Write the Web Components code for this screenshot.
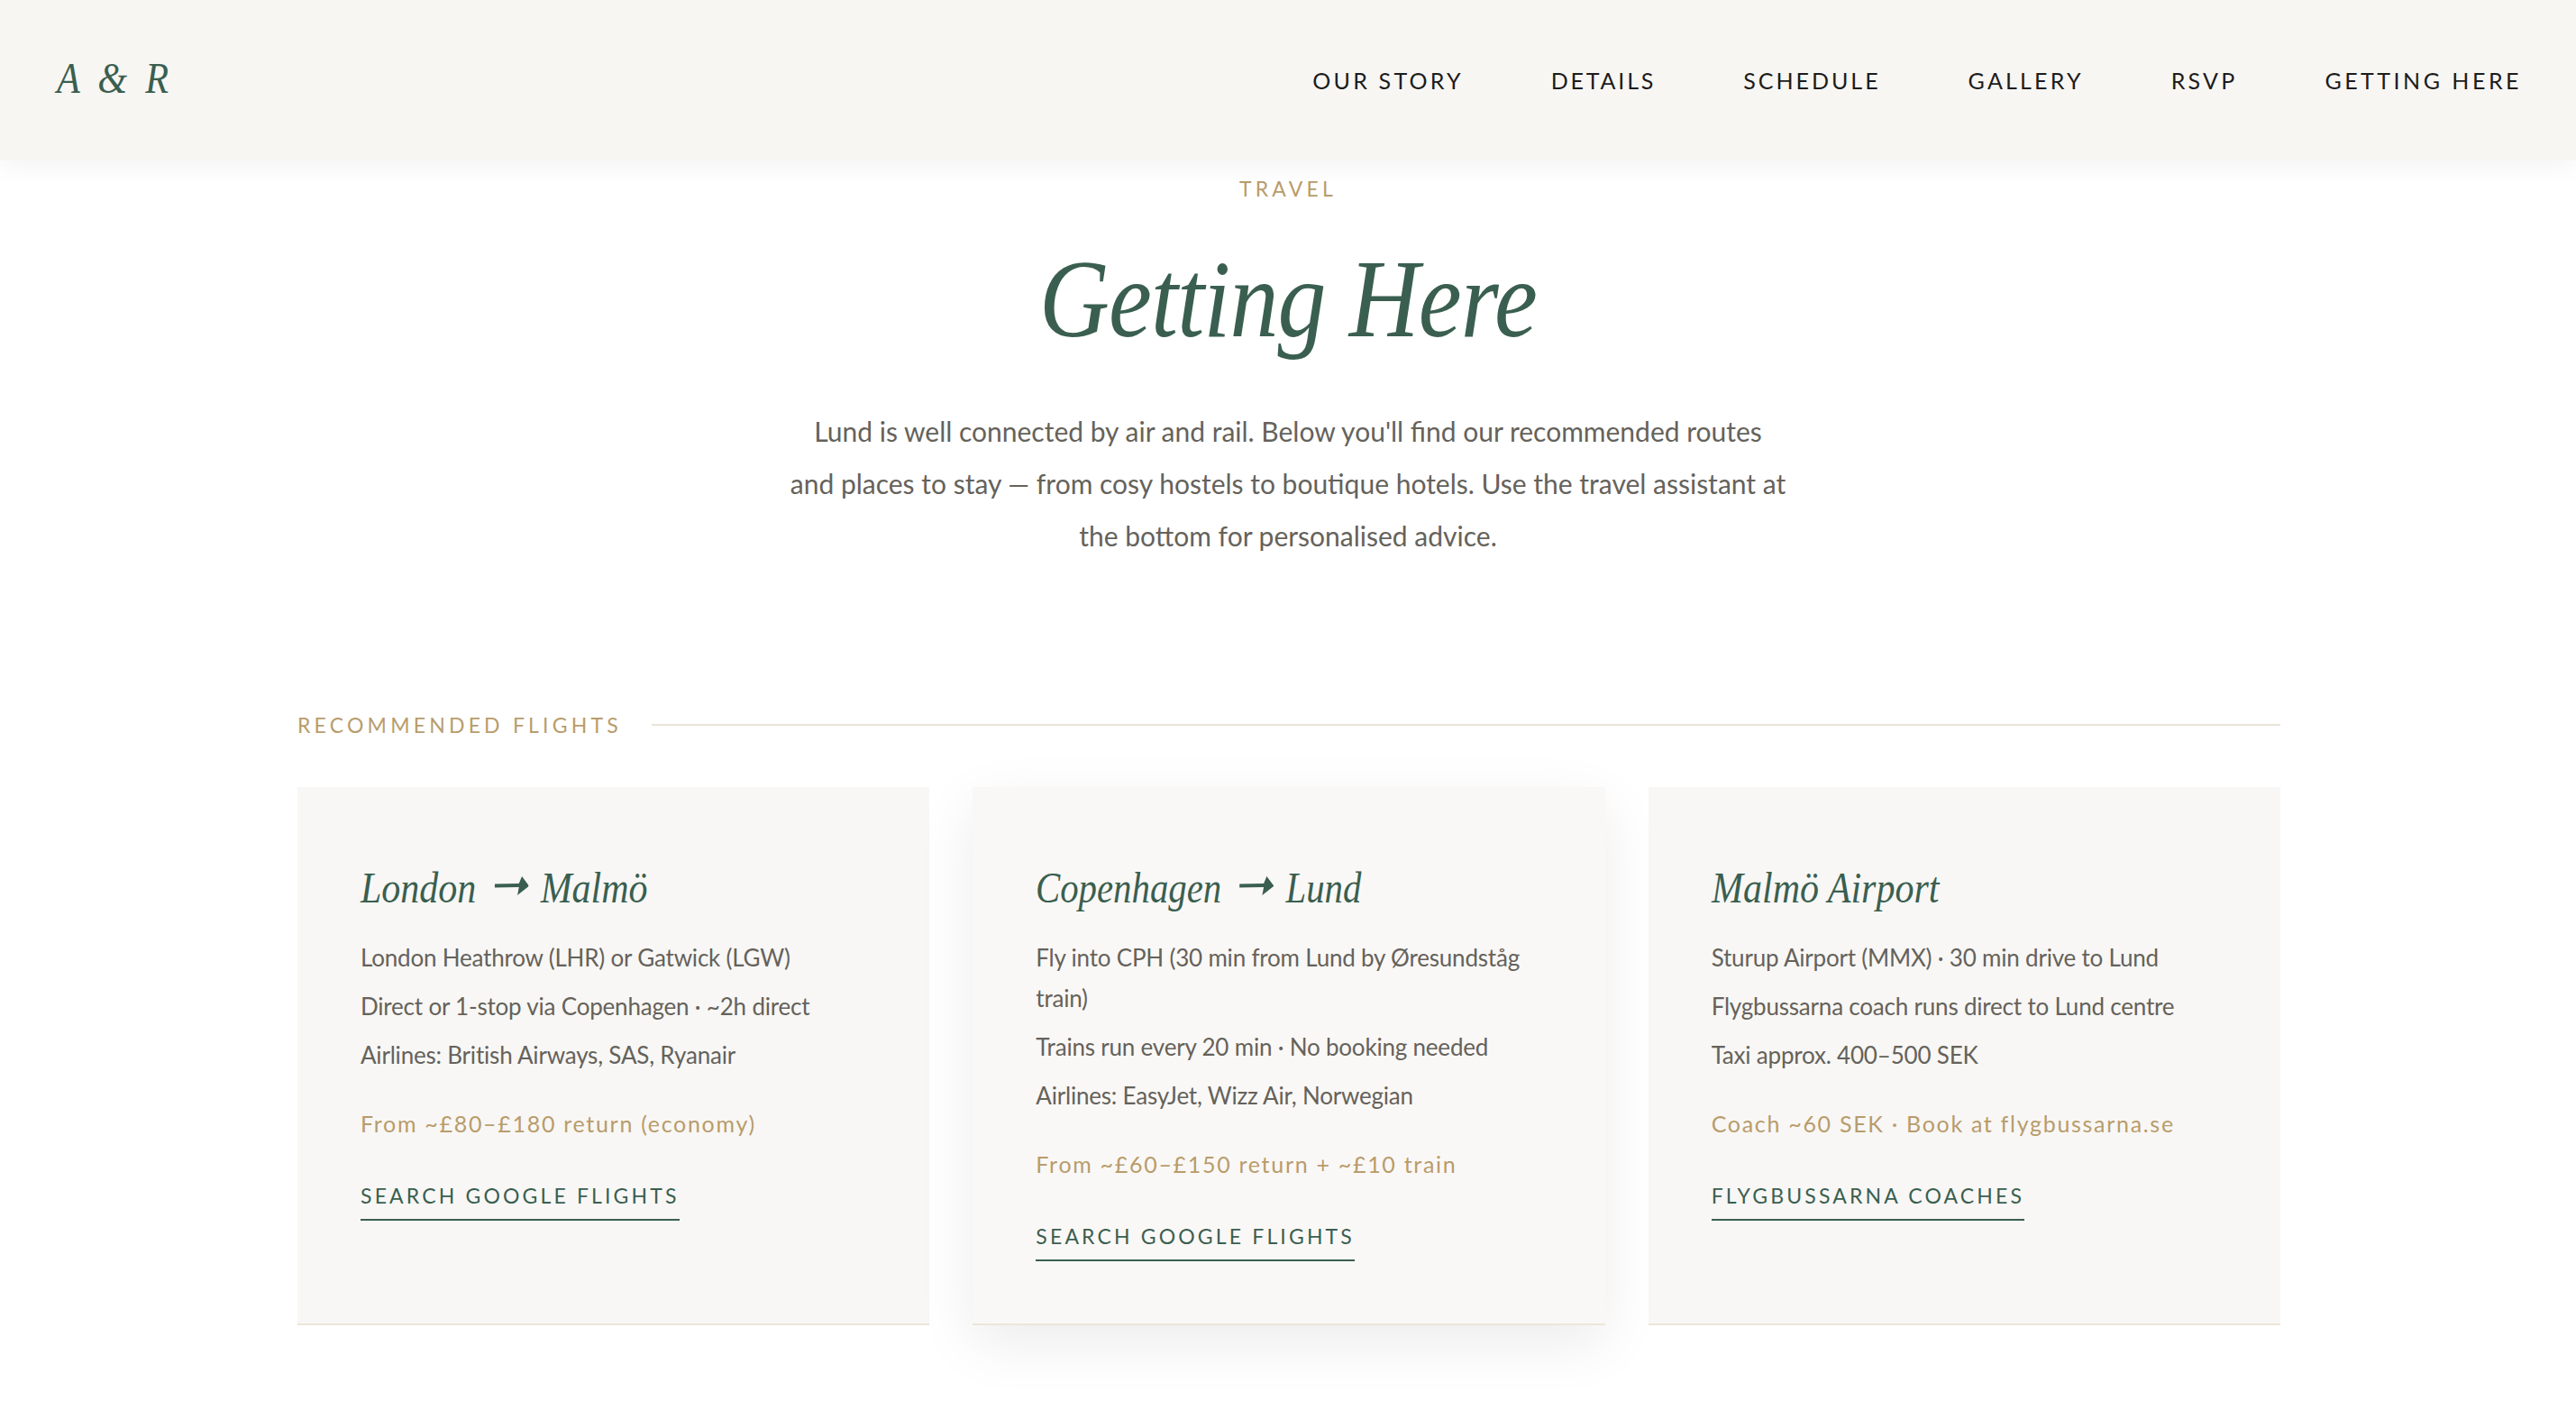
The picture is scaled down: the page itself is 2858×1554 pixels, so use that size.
<!DOCTYPE html>
<html lang="en">
<head>
<meta charset="utf-8">
<title>Getting Here</title>
<style>
  html { overflow: hidden; background: #fff; }
  body { margin: 0; min-height: 1554px; font-family: "Lato", "Open Sans", sans-serif; }
</style>
</head>
<body>
<site-header>
  <nav-link>OUR STORY</nav-link>
  <nav-link style="letter-spacing: 2.8px">DETAILS</nav-link>
  <nav-link style="letter-spacing: 3px">SCHEDULE</nav-link>
  <nav-link>GALLERY</nav-link>
  <nav-link>RSVP</nav-link>
  <nav-link style="letter-spacing: 3.5px">GETTING HERE</nav-link>
</site-header>
<page-intro eyebrow="TRAVEL" heading="Getting Here">
  Lund is well connected by air and rail. Below you'll find our recommended routes<br>
  and places to stay — from cosy hostels to boutique hotels. Use the travel assistant at<br>
  the bottom for personalised advice.
</page-intro>
<route-section label="RECOMMENDED FLIGHTS">
  <route-card from="London" to="Malmö" price="From ~£80–£180 return (economy)" link="SEARCH GOOGLE FLIGHTS">
    <p>London Heathrow (LHR) or Gatwick (LGW)</p>
    <p>Direct or 1-stop via Copenhagen · ~2h direct</p>
    <p>Airlines: British Airways, SAS, Ryanair</p>
  </route-card>
  <route-card featured style="--sx: 0.85" from="Copenhagen" to="Lund" price="From ~£60–£150 return + ~£10 train" link="SEARCH GOOGLE FLIGHTS">
    <p>Fly into CPH (30 min from Lund by Øresundståg train)</p>
    <p>Trains run every 20 min · No booking needed</p>
    <p>Airlines: EasyJet, Wizz Air, Norwegian</p>
  </route-card>
  <route-card from="Malmö Airport" price="Coach ~60 SEK · Book at flygbussarna.se" link="FLYGBUSSARNA COACHES">
    <p>Sturup Airport (MMX) · 30 min drive to Lund</p>
    <p>Flygbussarna coach runs direct to Lund centre</p>
    <p>Taxi approx. 400–500 SEK</p>
  </route-card>
</route-section>
<script>
  class SiteHeader extends HTMLElement {
    constructor() {
      super();
      this.attachShadow({ mode: 'open' });
      this.shadowRoot.innerHTML = `
        <style>
          :host {
            display: flex;
            align-items: center;
            justify-content: space-between;
            height: 178px;
            padding: 0 60px;
            background: #f8f6f3;
            box-shadow: 0 4px 30px rgba(0, 0, 0, 0.06);
            position: relative;
            z-index: 2;
          }
          .logo {
            font: italic 400 48px "Liberation Serif", serif;
            color: #3a5f50;
            letter-spacing: 3px;
            word-spacing: 5px;
            margin: -5px 0 0 3px;
            transform: scaleX(0.88);
            transform-origin: left center;
          }
          nav { display: flex; gap: 97px; }
        </style>
        <div class="logo">A &amp; R</div>
        <nav><slot></slot></nav>
      `;
    }
  }

  class NavLink extends HTMLElement {
    constructor() {
      super();
      this.attachShadow({ mode: 'open' });
      this.shadowRoot.innerHTML = `
        <style>
          :host {
            display: block;
            font: 400 25px "Lato", sans-serif;
            letter-spacing: 3.2px;
            color: #1c1c1c;
          }
        </style>
        <slot></slot>
      `;
    }
  }

  class PageIntro extends HTMLElement {
    constructor() {
      super();
      this.attachShadow({ mode: 'open' });
      this.shadowRoot.innerHTML = `
        <style>
          :host { display: block; text-align: center; padding-top: 17px; }
          .eyebrow {
            font: 400 23px/28px "Lato", sans-serif;
            letter-spacing: 4.2px;
            color: #b89c6b;
          }
          h1 {
            margin: 44px 0 52px;
            font: italic 400 122px/130px "Liberation Serif", serif;
            color: #3a5f50;
            letter-spacing: -1px;
            transform: scaleX(0.885);
          }
          .lead {
            font: 400 30px/58px "Lato", sans-serif;
            color: #65625b;
          }
        </style>
        <div class="eyebrow">${this.getAttribute('eyebrow')}</div>
        <h1>${this.getAttribute('heading')}</h1>
        <div class="lead"><slot></slot></div>
      `;
    }
  }

  class RouteSection extends HTMLElement {
    constructor() {
      super();
      this.attachShadow({ mode: 'open' });
      this.shadowRoot.innerHTML = `
        <style>
          :host { display: block; width: 2200px; margin: 166px 0 0 330px; }
          .label {
            display: flex;
            align-items: center;
            gap: 33px;
            margin-bottom: 54px;
            font: 400 23px/30px "Lato", sans-serif;
            letter-spacing: 4.2px;
            color: #b89c6b;
            white-space: nowrap;
          }
          .label::after { content: ""; flex: 1; height: 2px; background: #e9e3d8; }
          .cards { display: grid; grid-template-columns: repeat(3, 1fr); gap: 48px; }
        </style>
        <div class="label">${this.getAttribute('label')}</div>
        <div class="cards"><slot></slot></div>
      `;
    }
  }

  class RouteCard extends HTMLElement {
    constructor() {
      super();
      this.attachShadow({ mode: 'open' });
      const from = this.getAttribute('from');
      const to = this.getAttribute('to');
      const arrow = `<svg viewBox="0 0 38.3 21" preserveAspectRatio="none" fill="#3a5f50"><path d="M0 8.5 27 8 30.3 0 38.3 10.7 25.3 21 27 12 0 12.5z"/></svg>`;
      const title = to ? `<span>${from}</span>${arrow}<span>${to}</span>` : `<span>${from}</span>`;
      this.shadowRoot.innerHTML = `
        <style>
          :host {
            --sx: 0.875;
            display: block;
            box-sizing: border-box;
            height: 597px;
            padding: 82px 70px 0;
            background: #f8f7f5;
            border-bottom: 2px solid #ede5d8;
          }
          :host([featured]) {
            position: relative;
            background: #faf8f6;
            box-shadow: 0 20px 60px rgba(0, 0, 0, 0.08);
          }
          h3 {
            display: flex;
            align-items: center;
            margin: 0 0 25px;
            font: italic 400 48px/60px "Liberation Serif", serif;
            color: #3a5f50;
            white-space: nowrap;
            transform: scaleX(var(--sx));
            transform-origin: left center;
          }
          svg {
            width: calc(38.3px / var(--sx));
            height: 21px;
            margin: -6px calc(13px / var(--sx)) 0 calc(20px / var(--sx));
            flex: none;
          }
          .body { font: 400 26px/45px "Lato", sans-serif; letter-spacing: -0.2px; color: #65625b; }
          ::slotted(p) { margin: 0 0 9px; }
          .price {
            margin-top: 35px;
            font: 400 25px/36px "Lato", sans-serif;
            letter-spacing: 1.7px;
            color: #b89c6b;
          }
          a {
            display: inline-block;
            margin-top: 46px;
            padding-bottom: 10px;
            font: 400 23px/32px "Lato", sans-serif;
            letter-spacing: 3.15px;
            color: #3a5f50;
            border-bottom: 2px solid #3a5f50;
          }
        </style>
        <h3>${title}</h3>
        <div class="body"><slot></slot></div>
        <div class="price">${this.getAttribute('price')}</div>
        <a>${this.getAttribute('link')}</a>
      `;
    }
  }

  customElements.define('site-header', SiteHeader);
  customElements.define('nav-link', NavLink);
  customElements.define('page-intro', PageIntro);
  customElements.define('route-section', RouteSection);
  customElements.define('route-card', RouteCard);
</script>
</body>
</html>
